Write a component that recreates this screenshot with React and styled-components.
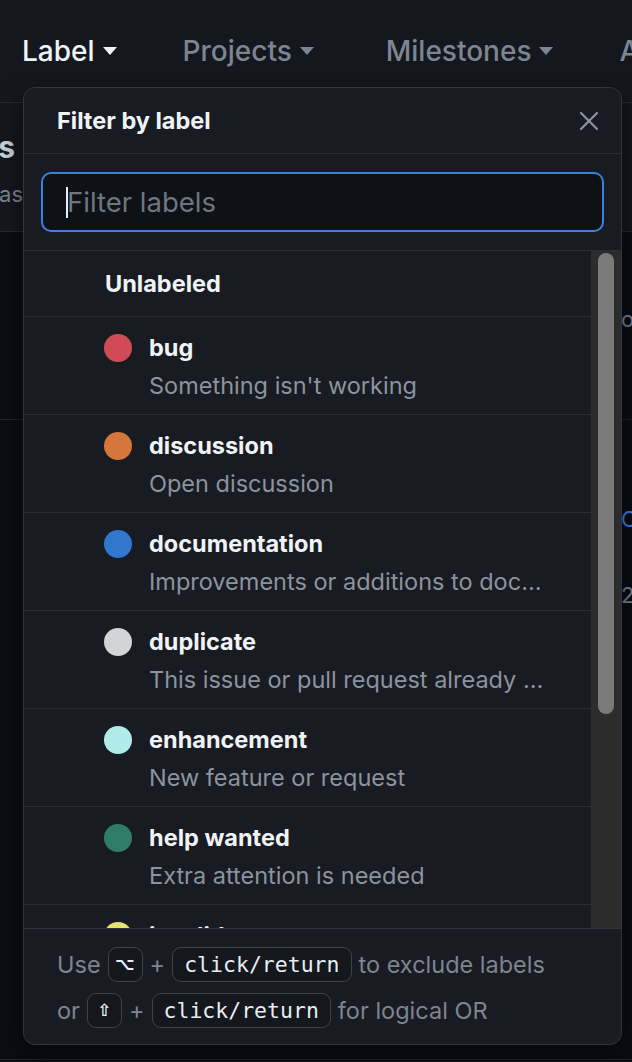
import React from 'react'
import styled, { createGlobalStyle } from 'styled-components'

const GlobalStyle = createGlobalStyle`
  html, body {
    margin: 0;
    padding: 0;
    background: #0b0e13;
  }
  body {
    font-family: Inter, "Noto Sans", sans-serif;
    -webkit-font-smoothing: antialiased;
  }
  * { box-sizing: border-box; }
`

const labels = [
  { name: 'bug', color: '#d04b55', desc: "Something isn't working" },
  { name: 'discussion', color: '#d5763a', desc: 'Open discussion' },
  { name: 'documentation', color: '#3077d0', desc: 'Improvements or additions to documentation' },
  { name: 'duplicate', color: '#d2d4d7', desc: 'This issue or pull request already exists' },
  { name: 'enhancement', color: '#b2ecea', desc: 'New feature or request' },
  { name: 'help wanted', color: '#2f7d69', desc: 'Extra attention is needed' },
  { name: 'invalid', color: '#e3e56c', desc: "This doesn't seem right" },
]

function Caret() {
  return (
    <svg width="14" height="8" viewBox="0 0 14 8">
      <path d="M0 0h14L7 8z" fill="currentColor" />
    </svg>
  )
}

function LabelFilter() {
  return (
    <Page>
      <GlobalStyle />
      <Nav>
        <NavItem $active>Label <Caret /></NavItem>
        <NavItem>Projects <Caret /></NavItem>
        <NavItem $shift={6}>Milestones <Caret /></NavItem>
        <NavItem>Assignee <Caret /></NavItem>
      </Nav>
      <TitleBlock>
        <Edge>
          <EdgeTitle>Issues</EdgeTitle>
          <EdgeSub>Has</EdgeSub>
        </Edge>
      </TitleBlock>
      <BgRow $h={188}>
        <Side><BgText $top={74}>ou</BgText></Side>
      </BgRow>
      <BgRow $h={640}>
        <Side>
          <BgText $top={86} $blue>Co</BgText>
          <BgText $top={50}>2</BgText>
        </Side>
      </BgRow>

      <Popover>
        <Header>
          <Title>Filter by label</Title>
          <Close>
            <svg width="20" height="20" viewBox="0 0 20 20">
              <path d="M2 2L18 18M18 2L2 18" stroke="currentColor" strokeWidth="2.2" strokeLinecap="round" />
            </svg>
          </Close>
        </Header>
        <Search>
          <InputWrap>
            <Input placeholder="Filter labels" />
          </InputWrap>
        </Search>
        <Body>
          <List>
            <Unlabeled>Unlabeled</Unlabeled>
            {labels.map((l) => (
              <Item key={l.name}>
                <Dot $color={l.color} />
                <Texts>
                  <Name>{l.name}</Name>
                  <Desc>{l.desc}</Desc>
                </Texts>
              </Item>
            ))}
          </List>
          <Track>
            <Thumb />
          </Track>
        </Body>
        <Footer>
          <Line>Use <Kbd $key>⌥</Kbd> + <Kbd>click/return</Kbd> to exclude labels</Line>
          <Line>or <Kbd $key>⇧</Kbd> + <Kbd>click/return</Kbd> for logical OR</Line>
        </Footer>
      </Popover>
    </Page>
  )
}

const Page = styled.div`
  position: relative;
  width: 632px;
  height: 1062px;
  overflow: hidden;
  background: #0a0d12;
`

const Nav = styled.nav`
  height: 103px;
  display: flex;
  align-items: center;
  gap: 66px;
  padding-left: 22px;
  background: #14171d;
  border-bottom: 1px solid #262a31;
  white-space: nowrap;
`

const NavItem = styled.span`
  display: flex;
  align-items: center;
  gap: 8px;
  margin-left: ${(p) => p.$shift || 0}px;
  font-size: 28px;
  font-weight: 500;
  color: ${(p) => (p.$active ? '#f0f3f6' : '#7d8590')};
`

const TitleBlock = styled.div`
  height: 129px;
  background: #14171d;
  border-bottom: 1px solid #262a31;
`

const Edge = styled.div`
  width: 23px;
  overflow: hidden;
  display: flex;
  flex-direction: column;
  align-items: flex-end;
  padding-top: 26px;
  white-space: nowrap;
`

const EdgeTitle = styled.div`
  font-size: 30px;
  font-weight: 700;
  line-height: 36px;
  margin-right: 8px;
  color: #c9d1d9;
`

const EdgeSub = styled.div`
  font-size: 22px;
  line-height: 30px;
  margin-top: 14px;
  color: #7d8590;
`

const BgRow = styled.div`
  height: ${(p) => p.$h}px;
  border-bottom: 1px solid #1f242b;
  display: flex;
  justify-content: flex-end;
`

const Side = styled.div`
  width: 11px;
  overflow: hidden;
  white-space: nowrap;
`

const BgText = styled.div`
  margin-top: ${(p) => p.$top}px;
  font-size: 22px;
  line-height: 26px;
  color: ${(p) => (p.$blue ? '#3f7ee8' : '#7d8590')};
`

const Popover = styled.div`
  position: absolute;
  top: 87px;
  left: 23px;
  width: 599px;
  height: 958px;
  display: flex;
  flex-direction: column;
  background: #181b21;
  border: 1px solid #30363d;
  border-radius: 12px;
  overflow: hidden;
  box-shadow: 0 8px 24px rgba(1, 4, 9, 0.6);
`

const Header = styled.div`
  height: 66px;
  flex: none;
  display: flex;
  align-items: center;
  justify-content: space-between;
  padding: 0 22px 0 33px;
  border-bottom: 1px solid #2a2f36;
`

const Title = styled.h2`
  margin: 0;
  font-size: 23.5px;
  font-weight: 700;
  color: #f0f3f6;
`

const Close = styled.button`
  border: 0;
  background: none;
  padding: 0;
  display: flex;
  color: #8b949e;
`

const Search = styled.div`
  flex: none;
  padding: 18px 17px;
  border-bottom: 1px solid #2a2f36;
`

const InputWrap = styled.div`
  position: relative;

  &::before {
    content: '';
    position: absolute;
    left: 25px;
    top: 15px;
    width: 2px;
    height: 31px;
    background: #e6edf3;
  }
`

const Input = styled.input`
  width: 100%;
  height: 60px;
  padding: 0 0 0 24px;
  border: 2px solid #3e80e2;
  border-radius: 10px;
  background: #0e1116;
  font-family: inherit;
  font-size: 27.5px;
  color: #e6edf3;
  outline: none;

  &::placeholder {
    color: #6e7681;
  }
`

const Body = styled.div`
  height: 678px;
  flex: none;
  display: flex;
  border-bottom: 1px solid #30363d;
`

const List = styled.div`
  flex: 1;
  min-width: 0;
  overflow: hidden;
`

const Unlabeled = styled.div`
  height: 66px;
  display: flex;
  align-items: center;
  padding-left: 81px;
  font-size: 23.5px;
  font-weight: 700;
  color: #f0f3f6;
  border-bottom: 1px solid #2a2f36;
`

const Item = styled.div`
  height: 98px;
  flex: none;
  display: flex;
  align-items: flex-start;
  gap: 17px;
  padding: 17px 40px 0 80px;
  border-bottom: 1px solid #2a2f36;
`

const Dot = styled.span`
  flex: none;
  width: 28px;
  height: 28px;
  border-radius: 50%;
  background: ${(p) => p.$color};
`

const Texts = styled.div`
  min-width: 0;
  flex: 1;
`

const Name = styled.div`
  font-size: 23.5px;
  line-height: 28px;
  font-weight: 700;
  color: #f0f3f6;
`

const Desc = styled.div`
  font-size: 23.5px;
  line-height: 28px;
  margin-top: 10px;
  color: #8b949e;
  white-space: nowrap;
  overflow: hidden;
  text-overflow: ellipsis;
`

const Track = styled.div`
  width: 30px;
  flex: none;
  background: #2c2c2c;
  padding: 2px 7px 0;
`

const Thumb = styled.div`
  height: 461px;
  border-radius: 8px;
  background: #7a7a7a;
`

const Footer = styled.div`
  flex: 1;
  padding: 12px 0 0 33px;
`

const Line = styled.div`
  display: flex;
  align-items: center;
  gap: 7px;
  height: 46px;
  font-size: 23.5px;
  color: #7d8590;
  white-space: nowrap;
`

const Kbd = styled.kbd`
  display: inline-flex;
  align-items: center;
  justify-content: center;
  height: 35px;
  min-width: ${(p) => (p.$key ? '35px' : '0')};
  padding: 0 ${(p) => (p.$key ? '0' : '11px')};
  border: 1px solid #3d444d;
  border-radius: 9px;
  background: #14171c;
  font-family: ${(p) => (p.$key ? '"DejaVu Sans", sans-serif' : '"DejaVu Sans Mono", "Liberation Mono", monospace')};
  font-size: ${(p) => (p.$key ? '17px' : '21.5px')};
  font-weight: ${(p) => (p.$key ? '700' : '500')};
  color: #e6edf3;
`

export default LabelFilter
